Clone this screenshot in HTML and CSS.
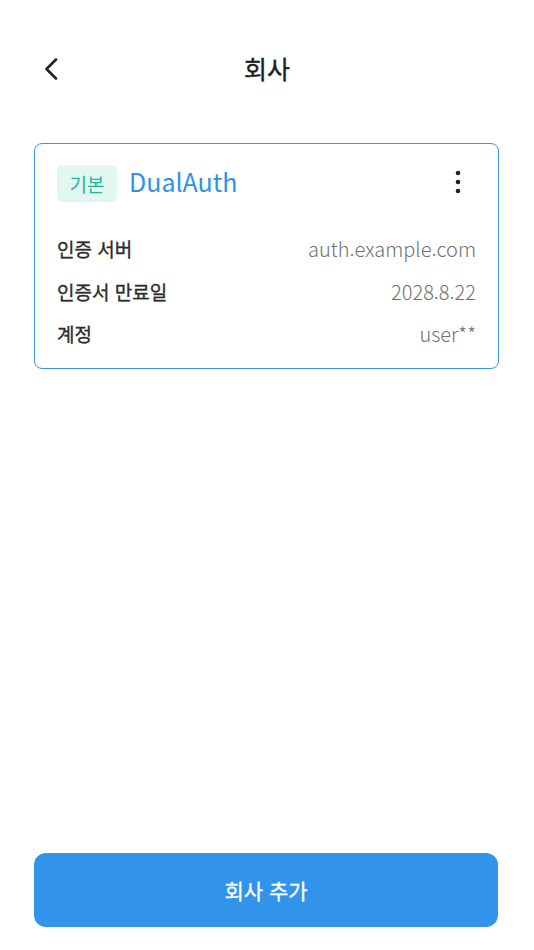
FILE: index.html
```html
<!DOCTYPE html>
<html lang="ko">
<head>
  <meta charset="UTF-8">
  <title>회사</title>
  <meta name="viewport" content="width=device-width, initial-scale=1.0">
  <link rel="stylesheet" href="styles.css">
</head>
<body>
  <div class="page">
    <header class="topbar">
      <button class="back-btn" aria-label="뒤로">
        <svg width="14" height="22" viewBox="0 0 14 22">
          <path d="M12 1.5 L2.5 11 L12 20.5" fill="none" stroke="#222" stroke-width="2.6" stroke-linecap="round" stroke-linejoin="round"/>
        </svg>
      </button>
      <h1 class="title">회사</h1>
    </header>

    <main class="content">
      <div class="company-card">
        <div class="card-head">
          <span class="badge">기본</span>
          <span class="company-name">DualAuth</span>
          <button class="more-btn" aria-label="더보기">
            <svg width="8" height="24" viewBox="0 0 8 24">
              <circle cx="4" cy="3" r="2.3" fill="#222"/>
              <circle cx="4" cy="12" r="2.3" fill="#222"/>
              <circle cx="4" cy="21" r="2.3" fill="#222"/>
            </svg>
          </button>
        </div>
        <ul class="info-list">
          <li><span class="label">인증 서버</span><span class="value">auth.example.com</span></li>
          <li><span class="label">인증서 만료일</span><span class="value">2028.8.22</span></li>
          <li><span class="label">계정</span><span class="value">user**</span></li>
        </ul>
      </div>
    </main>

    <div class="bottom">
      <button class="add-btn">회사 추가</button>
    </div>
  </div>
</body>
</html>
```

FILE: styles.css
```css
* {
  margin: 0;
  padding: 0;
  box-sizing: border-box;
}

body {
  font-family: "Noto Sans CJK KR", "Noto Sans", sans-serif;
  background: #ffffff;
  color: #222222;
}

.page {
  min-height: 950px;
  display: flex;
  flex-direction: column;
}

/* Top bar */
.topbar {
  position: relative;
  height: 136px;
  display: flex;
  align-items: center;
  justify-content: center;
}

.back-btn {
  position: absolute;
  left: 38px;
  top: 57px;
  width: 26px;
  height: 24px;
  background: transparent;
  border: none;
  display: flex;
  align-items: center;
  justify-content: center;
}

.title {
  font-size: 25px;
  font-weight: 400;
  color: #1e1e1e;
  -webkit-text-stroke: 0.4px #1e1e1e;
}

/* Card */
.content {
  padding: 7px 35px 0 34px;
}

.company-card {
  border: 1.5px solid #3c95e8;
  border-radius: 8px;
  padding: 20.5px 22px 13px 22px;
}

.card-head {
  display: flex;
  align-items: center;
  height: 37px;
  margin-bottom: 26px;
}

.badge {
  background: #e3f7f2;
  color: #22b894;
  font-size: 19px;
  font-weight: 400;
  height: 37px;
  width: 60px;
  border-radius: 5px;
  display: flex;
  align-items: center;
  justify-content: center;
}

.company-name {
  margin-left: 12px;
  margin-bottom: 4px;
  font-size: 25px;
  font-weight: 400;
  color: #2f92e8;
  flex: 1;
}

.more-btn {
  background: transparent;
  border: none;
  width: 24px;
  height: 24px;
  margin-right: 6px;
  margin-bottom: 3px;
  display: flex;
  align-items: center;
  justify-content: center;
}

.info-list {
  list-style: none;
}

.info-list li {
  height: 42.5px;
  display: flex;
  align-items: center;
  justify-content: space-between;
}

.label {
  font-size: 19px;
  font-weight: 400;
  color: #2c2c2c;
  -webkit-text-stroke: 0.35px #2c2c2c;
}

.value {
  font-size: 20px;
  font-weight: 300;
  color: #707070;
}

/* Bottom button */
.bottom {
  margin-top: auto;
  padding: 0 36px 23px 34px;
}

.add-btn {
  width: 100%;
  height: 74px;
  border: none;
  border-radius: 12px;
  background: #3194ea;
  color: #ffffff;
  font-family: "Noto Sans CJK KR", sans-serif;
  font-size: 21px;
  font-weight: 400;
  -webkit-text-stroke: 0.3px #ffffff;
}
```
